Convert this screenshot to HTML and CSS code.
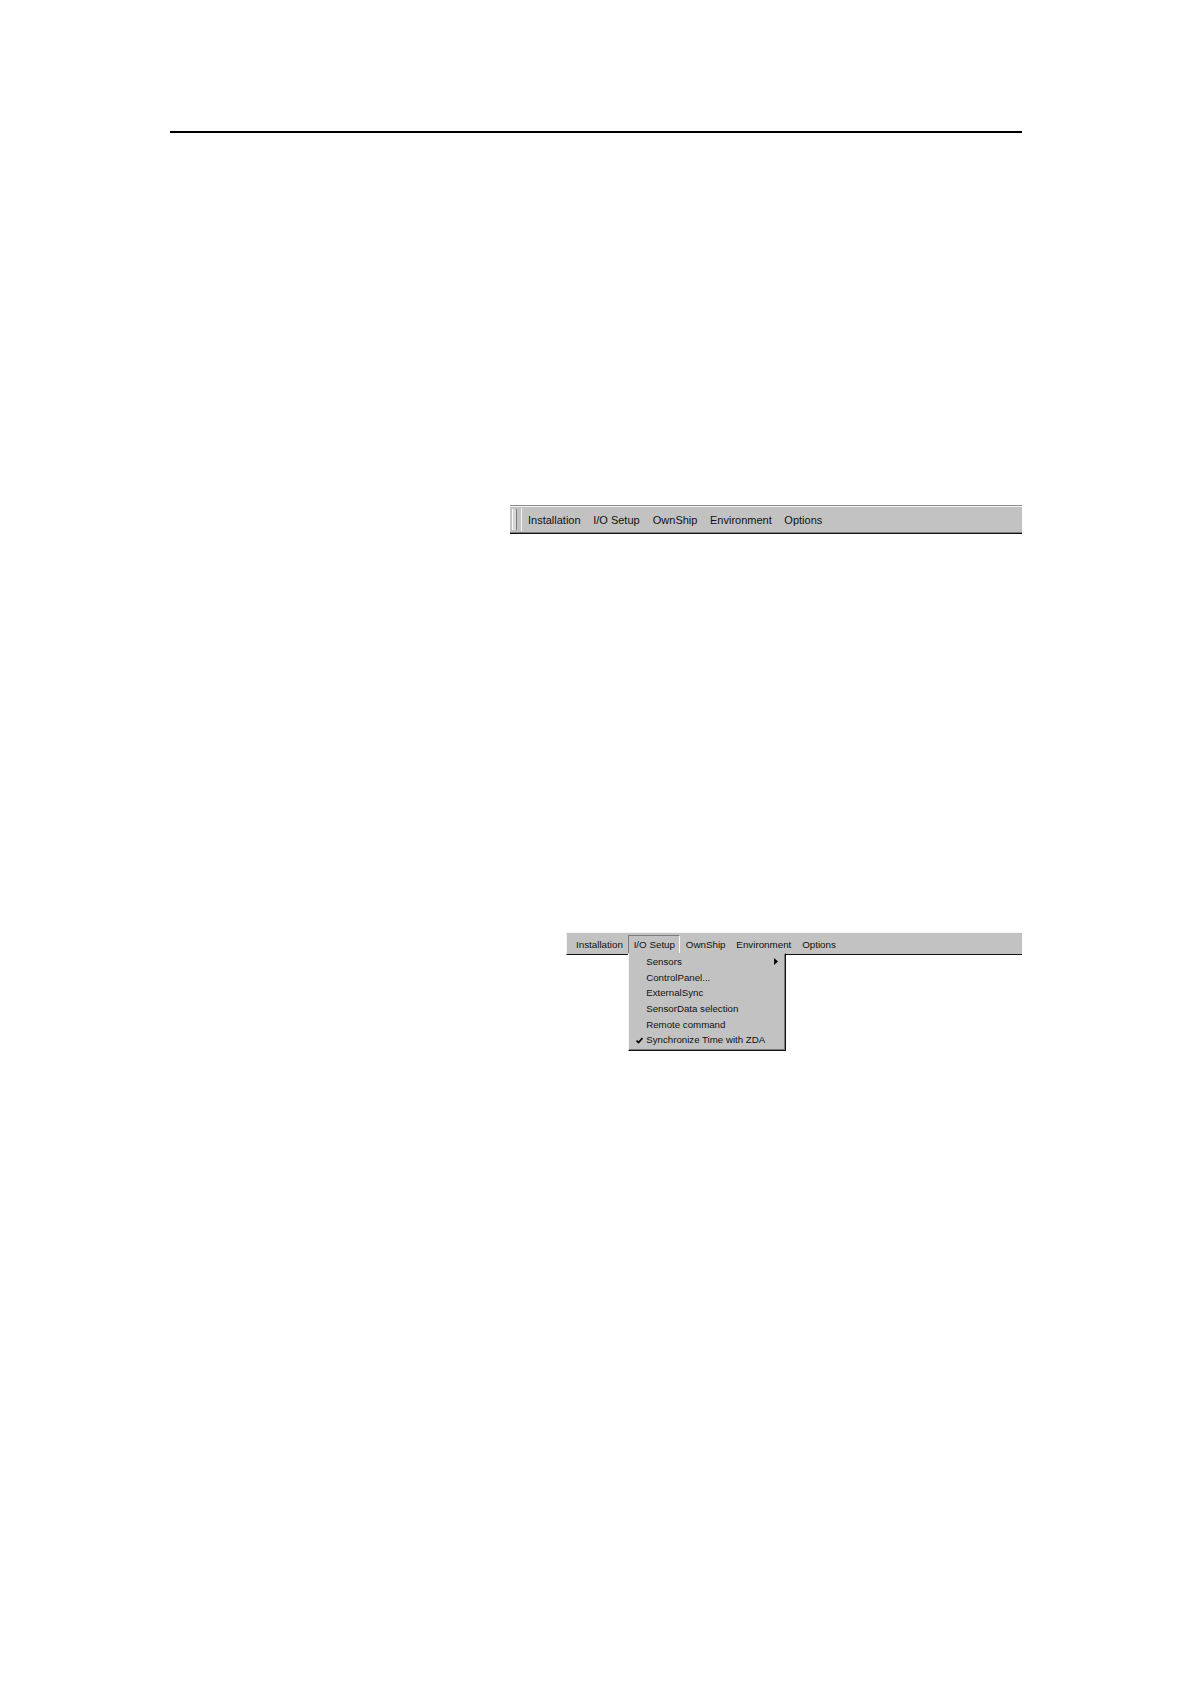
FILE: index.html
```html
<!DOCTYPE html>
<html>
<head>
<meta charset="utf-8">
<link rel="stylesheet" href="styles.css">
</head>
<body>
<div class="page">
  <div class="rule"></div>

  <div class="menubar1">
    <div class="grip"></div>
    <div class="band">
      <span class="item1">Installation</span>
      <span class="item1">I/O Setup</span>
      <span class="item1">OwnShip</span>
      <span class="item1">Environment</span>
      <span class="item1">Options</span>
    </div>
  </div>

  <div class="menubar2">
    <span class="item2">Installation</span>
    <span class="item2 open">I/O Setup
      <div class="dropdown">
        <div class="row">Sensors<svg class="arrow" width="4" height="7" viewBox="0 0 4 7"><path d="M0 0 L4 3.5 L0 7 Z" fill="#000"/></svg></div>
        <div class="row">ControlPanel...</div>
        <div class="row">ExternalSync</div>
        <div class="row">SensorData selection</div>
        <div class="row">Remote command</div>
        <div class="row"><svg class="check" width="7" height="7" viewBox="0 0 7 7"><path d="M0.5 3.5 L2.5 5.5 L6.5 1" fill="none" stroke="#000" stroke-width="1.6"/></svg>Synchronize Time with ZDA</div>
      </div>
    </span>
    <span class="item2">OwnShip</span>
    <span class="item2">Environment</span>
    <span class="item2">Options</span>
  </div>
</div>
</body>
</html>
```

FILE: styles.css
```css
html, body {
  margin: 0;
  padding: 0;
  background: #ffffff;
}

.page {
  width: 1191px;
  min-height: 1684px;
  overflow: hidden;
  font-family: "Liberation Sans", Arial, sans-serif;
  color: #111;
}

.rule {
  margin: 131px 0 0 170px;
  width: 852px;
  height: 2px;
  background: #000;
}

.menubar1 {
  margin: 372px 0 0 510px;
  width: 512px;
  height: 29px;
  box-sizing: border-box;
  display: flex;
  background: #c2c2c2;
  border-top: 1px solid #8a8a8a;
  border-bottom: 1px solid #111;
  box-shadow: inset 0 1px 0 #f4f4f4, inset 0 -1px 0 #7c7c7c;
}

.grip {
  width: 3px;
  margin: 3px 0 3px 2px;
  background: #d6d6d6;
  border-left: 1px solid #fafafa;
  border-right: 1px solid #7c7c7c;
}

.band {
  flex: 1;
  display: flex;
  align-items: center;
  margin: 2px 0 2px 4px;
  border-left: 1px solid #f4f4f4;
}

.item1 {
  padding: 0 6.3px;
  font-size: 11px;
  line-height: 14px;
}

.item1:first-child {
  padding-left: 6px;
}

.item1:nth-child(3) {
  padding-left: 6.8px;
}

.menubar2 {
  margin: 398px 0 0 566px;
  width: 456px;
  height: 23px;
  box-sizing: border-box;
  display: flex;
  align-items: flex-end;
  padding-left: 3px;
  background: #c2c2c2;
  border-top: 1px solid #f4f4f4;
  border-left: 1px solid #f0f0f0;
  border-bottom: 1px solid #111;
}

.item2 {
  position: relative;
  padding: 0 4.4px;
  height: 19px;
  line-height: 18px;
  font-size: 9.8px;
  box-sizing: border-box;
  border: 1px solid transparent;
  border-bottom: none;
}

.item2:first-child {
  padding-left: 5px;
}

.item2.open {
  border-left-color: #7c7c7c;
  border-top-color: #7c7c7c;
  border-right-color: #fafafa;
}

.dropdown {
  position: absolute;
  left: -1px;
  top: 17px;
  width: 158px;
  height: 98px;
  box-sizing: border-box;
  padding: 0 0 2px 0;
  background: #c2c2c2;
  border-left: 1px solid #f4f4f4;
  border-top: 1px solid #c2c2c2;
  border-right: 1px solid #111;
  border-bottom: 1px solid #111;
  box-shadow: inset -1px -1px 0 #7c7c7c;
  z-index: 2;
}

.row {
  position: relative;
  height: 15.7px;
  line-height: 15.7px;
  padding-left: 17px;
  font-size: 9.7px;
  white-space: nowrap;
}

.arrow {
  position: absolute;
  right: 7px;
  top: 4px;
}

.check {
  position: absolute;
  left: 7px;
  top: 5px;
}
```
